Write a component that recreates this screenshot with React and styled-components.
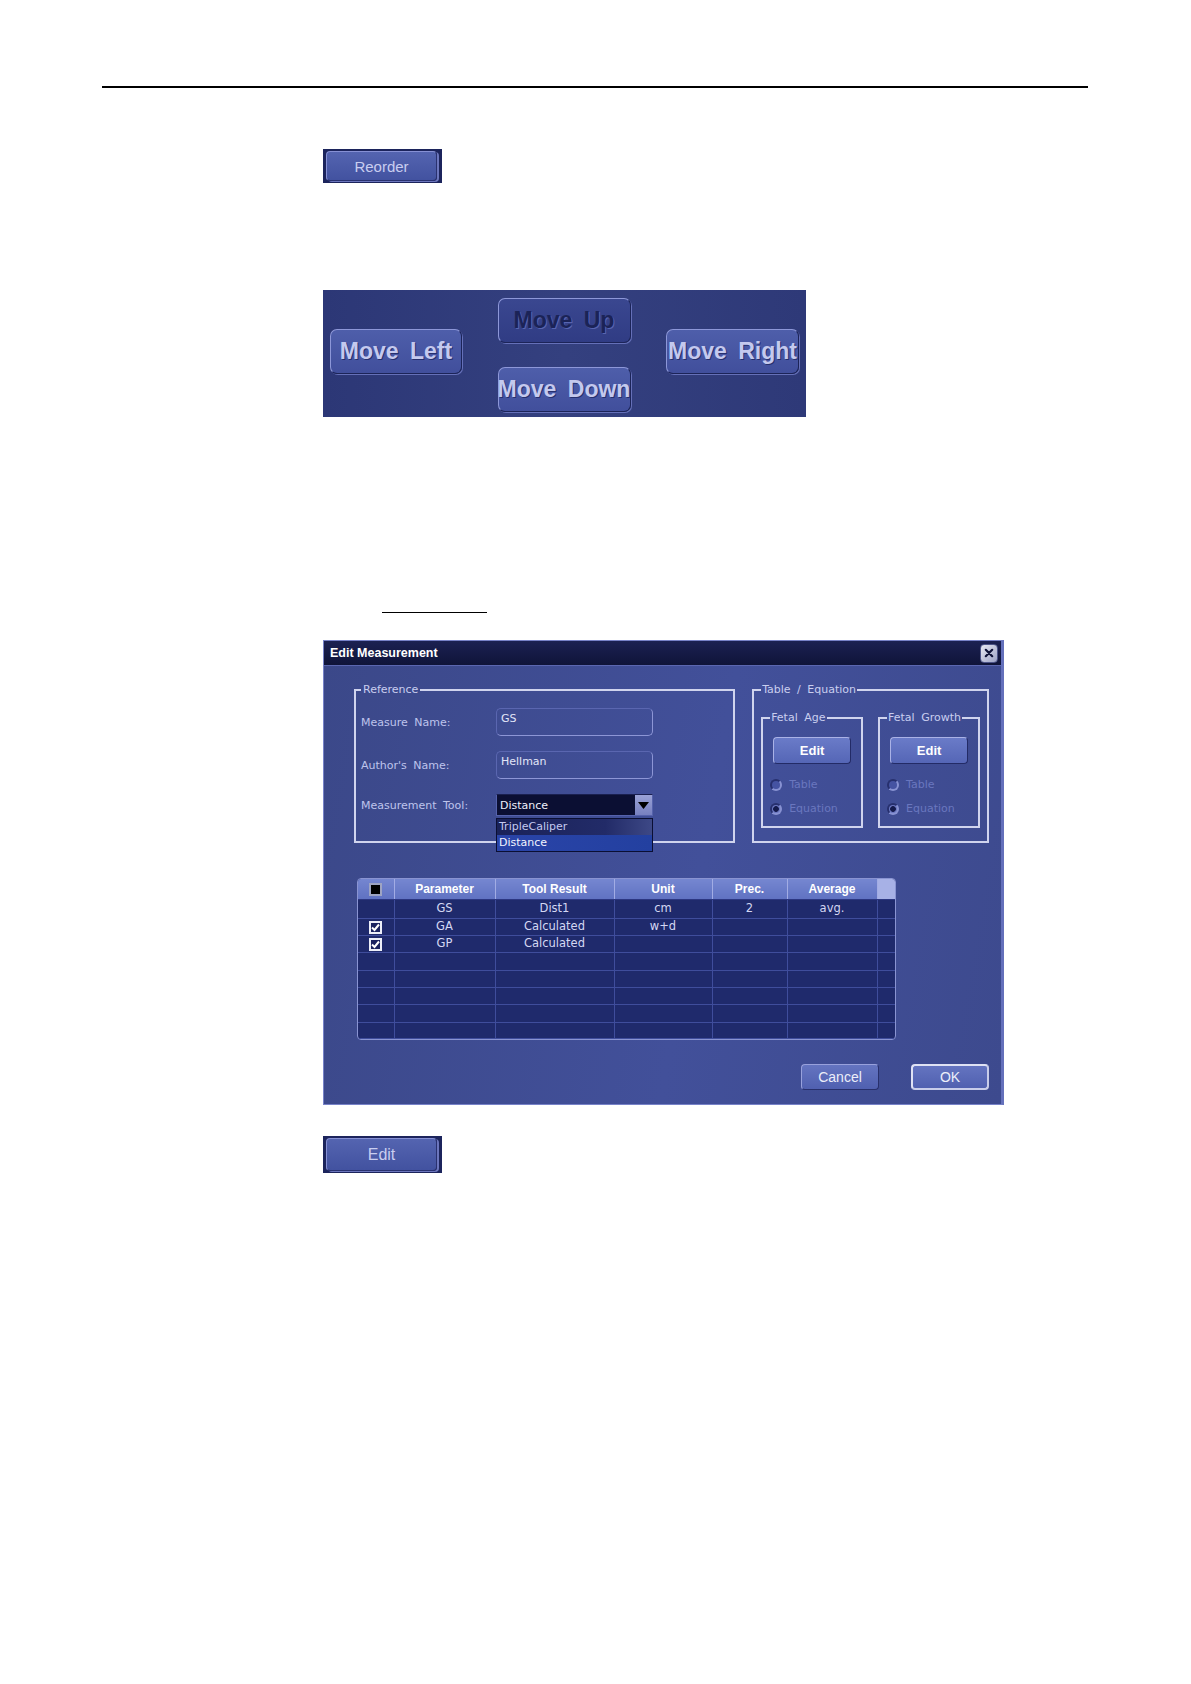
import React from "react";
import styled, { createGlobalStyle, css } from "styled-components";

const GlobalStyle = createGlobalStyle`
  body {
    margin: 0;
    background: #fff;
    font-family: "Liberation Sans", Arial, sans-serif;
  }
`;

const uiFont = `"DejaVu Sans", Verdana, sans-serif`;

const Page = styled.div`
  width: 1191px;
  height: 1684px;
  padding-top: 86px;
  box-sizing: border-box;
`;

const Rule = styled.div`
  margin-left: 102px;
  width: 986px;
  height: 2px;
  background: #000;
`;

const Content = styled.div`
  margin-left: 323px;
  display: flex;
  flex-direction: column;
  align-items: flex-start;
`;

// small dark frame holding a single key (Reorder / Edit)
const KeyFrame = styled.div`
  margin-top: ${(p) => p.$top}px;
  width: 119px;
  height: ${(p) => p.$h}px;
  box-sizing: border-box;
  background: #1c245c;
  padding: 2px 5px 2px 3px;
  display: flex;
`;

const KeyButton = styled.div`
  flex: 1;
  border-radius: 4px;
  border: 1px solid #8690d4;
  border-right-color: #2a3270;
  border-bottom-color: #2a3270;
  box-shadow: 2px 1px 0 #6c76bd;
  background: linear-gradient(#5464b0, #4252a0);
  color: #c9cef0;
  font-size: ${(p) => p.$size}px;
  display: flex;
  align-items: center;
  justify-content: center;
`;

const MovePanel = styled.div`
  margin-top: 107px;
  width: 483px;
  height: 127px;
  box-sizing: border-box;
  padding: 8px 7px 5px;
  background: linear-gradient(90deg, #2c3776, #34407f 50%, #2e3978);
  display: grid;
  grid-template-columns: 132px 133px 133px;
  justify-content: space-between;
  align-items: start;
`;

const MoveColumn = styled.div`
  display: flex;
  flex-direction: column;
  gap: 24px;
`;

const MoveButton = styled.div`
  height: 45px;
  box-sizing: border-box;
  margin-top: ${(p) => p.$top || 0}px;
  border-radius: 7px;
  border: 1px solid #8d97d8;
  border-right-color: #1c2458;
  border-bottom-color: #1c2458;
  box-shadow: 1px 1px 0 #6570b8;
  background: ${(p) =>
    p.$dim
      ? "linear-gradient(#3a4790, #303c84)"
      : "linear-gradient(#4e5eaa, #414f9c)"};
  color: ${(p) => (p.$dim ? "#1b2357" : "#c4c9ee")};
  text-shadow: ${(p) =>
    p.$dim ? "1px 1px 0 #5865b0" : "1px 1px 0 #26306e"};
  font-weight: bold;
  font-size: 23px;
  word-spacing: 5px;
  display: flex;
  align-items: center;
  justify-content: center;
  white-space: nowrap;
`;

const Underline = styled.div`
  margin: 195px 0 0 59px;
  width: 105px;
  height: 1px;
  background: #000;
`;

const Dialog = styled.div`
  margin-top: 27px;
  width: 681px;
  height: 465px;
  box-sizing: border-box;
  border: 1px solid #7782c8;
  border-right: 3px solid #6470bb;
  background: linear-gradient(100deg, #3b4889, #42509a 55%, #3d4a8e);
  display: flex;
  flex-direction: column;
`;

const TitleBar = styled.div`
  height: 25px;
  box-sizing: border-box;
  border-bottom: 1px solid #5b67b0;
  background: linear-gradient(#1b2152, #0f1439);
  display: flex;
  align-items: center;
  justify-content: space-between;
  padding: 0 3px 0 6px;
  color: #fff;
  font-weight: bold;
  font-size: 12.5px;
`;

const CloseBox = styled.div`
  width: 16px;
  height: 17px;
  border-radius: 4px;
  border: 1px solid #4c5488;
  background: linear-gradient(135deg, #e6e8f2, #9ca2c6);
  display: flex;
  align-items: center;
  justify-content: center;
`;

const Body = styled.div`
  flex: 1;
  display: flex;
  flex-direction: column;
  padding: 17px 12px 14px 30px;
  font-family: ${uiFont};
`;

const TopRow = styled.div`
  display: flex;
  gap: 17px;
  align-items: flex-start;
`;

const GroupBox = styled.fieldset`
  margin: 0;
  box-sizing: border-box;
  width: ${(p) => p.$w}px;
  height: ${(p) => p.$h}px;
  min-width: 0;
  border: 2px solid #d0d4ee;
  padding: ${(p) => p.$pad};
  position: relative;
`;

const Legend = styled.legend`
  padding: 0 ${(p) => p.$px ?? 2}px;
  font-size: 11px;
  line-height: 14px;
  color: #c9ceef;
  word-spacing: 3px;
`;

const FormGrid = styled.div`
  display: grid;
  grid-template-columns: 135px 157px;
  grid-template-rows: 28px 28px 22px;
  row-gap: 15px;
  align-items: center;
`;

const Label = styled.div`
  font-size: 11px;
  color: #bec4ec;
  word-spacing: 3px;
`;

const TextField = styled.div`
  height: 28px;
  box-sizing: border-box;
  border: 1px solid #8d96d6;
  border-top-color: #5a66b0;
  border-left-color: #5a66b0;
  border-radius: 5px;
  padding: 3px 4px;
  font-size: 11px;
  color: #e2e5f8;
`;

const SelectWrap = styled.div`
  position: relative;
  height: 22px;
`;

const SelectBox = styled.div`
  height: 22px;
  box-sizing: border-box;
  border: 1px solid #5562ac;
  border-top-color: #1a2050;
  background: #0b0f33;
  display: flex;
  align-items: center;
  justify-content: space-between;
  padding-left: 3px;
  font-size: 11px;
  color: #eef0fb;
`;

const ArrowButton = styled.div`
  width: 17px;
  height: 20px;
  background: linear-gradient(#9aa2d6, #7780c0);
  display: flex;
  align-items: center;
  justify-content: center;
`;

const DropList = styled.div`
  position: absolute;
  top: 24px;
  left: 0;
  width: 157px;
  box-sizing: border-box;
  border: 1px solid #0b0f33;
  z-index: 2;
`;

const DropItem = styled.div`
  height: 16px;
  line-height: 16px;
  padding-left: 2px;
  font-size: 11px;
  color: ${(p) => (p.$active ? "#f2f4ff" : "#c4caf0")};
  background: ${(p) =>
    p.$active
      ? "linear-gradient(90deg, #2a44a8, #2340a0)"
      : "linear-gradient(90deg, #1a2258, #222b68 70%, #3d4886)"};
`;

const EquationRow = styled.div`
  display: flex;
  gap: 15px;
`;

const FetalBox = styled.div`
  display: flex;
  flex-direction: column;
  align-items: flex-start;
  padding-top: 12px;
`;

const SmallEdit = styled.div`
  margin-left: 3px;
  width: 78px;
  height: 27px;
  box-sizing: border-box;
  border-radius: 4px;
  border: 1px solid #aab2e6;
  border-right-color: #232b66;
  border-bottom-color: #232b66;
  background: linear-gradient(#6a7bc8, #5566b6);
  color: #fff;
  font-family: "Liberation Sans", Arial, sans-serif;
  font-weight: bold;
  font-size: 13px;
  display: flex;
  align-items: center;
  justify-content: center;
`;

const RadioRow = styled.div`
  margin-top: ${(p) => p.$top}px;
  display: flex;
  align-items: center;
  gap: 7px;
  font-size: 11px;
  color: #6a77bf;
`;

const Radio = styled.span`
  width: 12px;
  height: 12px;
  border-radius: 50%;
  box-sizing: border-box;
  border: 2px solid #27306e;
  border-right-color: #8892d2;
  border-bottom-color: #8892d2;
  background: #4553a2;
  ${(p) =>
    p.$checked &&
    css`
      background: radial-gradient(circle, #141a4c 0 2.5px, #6a76c0 3.2px);
    `}
`;

const TableFrame = styled.div`
  margin: 35px 0 0 3px;
  width: 537px;
  border: 1px solid #8a94d2;
  border-radius: 4px;
  overflow: hidden;
  background: #1f2a6c;
`;

const Grid = styled.table`
  width: 100%;
  border-collapse: collapse;
  table-layout: fixed;
`;

const HeadCell = styled.th`
  height: 20px;
  padding: 0;
  background: ${(p) =>
    p.$scroll ? "#a7b1e6" : "linear-gradient(#7586d0, #6072c2)"};
  border-right: 1px solid #a2ace4;
  border-bottom: 1px solid #2c3782;
  color: #fff;
  font-family: "Liberation Sans", Arial, sans-serif;
  font-weight: bold;
  font-size: 12px;
  text-align: center;
  &:last-child {
    border-right: none;
  }
`;

const Cell = styled.td`
  height: ${(p) => p.$h}px;
  padding: 0;
  border-right: 1px solid #3f4d9c;
  border-bottom: 1px solid #3f4d9c;
  color: #d4d8f3;
  font-family: ${uiFont};
  font-size: 11.5px;
  text-align: center;
  line-height: 1;
  &:last-child {
    border-right: none;
  }
`;

const HeadBox = styled.span`
  display: inline-block;
  width: 13px;
  height: 13px;
  box-sizing: border-box;
  border: 2px solid #9ea4c2;
  background: #000;
  vertical-align: middle;
`;

const CheckBox = styled.span`
  display: inline-flex;
  align-items: center;
  justify-content: center;
  width: 13px;
  height: 13px;
  box-sizing: border-box;
  border: 2px solid #eceef8;
  background: #1a2260;
  vertical-align: middle;
`;

const ButtonRow = styled.div`
  margin-top: auto;
  display: flex;
  justify-content: flex-end;
  gap: 32px;
`;

const DialogButton = styled.div`
  width: 78px;
  height: 26px;
  box-sizing: border-box;
  border-radius: 4px;
  border: ${(p) => (p.$focus ? "2px solid #dfe2f4" : "1px solid #98a1dc")};
  border-right-color: ${(p) => (p.$focus ? "#c8cdea" : "#28306c")};
  border-bottom-color: ${(p) => (p.$focus ? "#c8cdea" : "#28306c")};
  background: linear-gradient(#6474c0, #5060b0);
  color: #eceef9;
  font-family: "Liberation Sans", Arial, sans-serif;
  font-size: 14px;
  display: flex;
  align-items: center;
  justify-content: center;
`;

const widths = [36, 101, 119, 98, 75, 90, 18];
const headers = ["", "Parameter", "Tool Result", "Unit", "Prec.", "Average", ""];
const rows = [
  { check: false, cells: ["GS", "Dist1", "cm", "2", "avg."], h: 18 },
  { check: true, cells: ["GA", "Calculated", "w+d", "", ""], h: 16 },
  { check: true, cells: ["GP", "Calculated", "", "", ""], h: 16 },
  { cells: [], h: 17 },
  { cells: [], h: 16 },
  { cells: [], h: 16 },
  { cells: [], h: 17 },
  { cells: [], h: 15 },
];

const Check = () => (
  <svg width="9" height="9" viewBox="0 0 9 9">
    <path d="M1 4.5 L3.5 7 L8 1.5" stroke="#fff" strokeWidth="2" fill="none" />
  </svg>
);

const FetalGroup = ({ title }) => (
  <GroupBox $w={103} $h={117} $pad="0 7px">
    <Legend $px={1}>{title}</Legend>
    <FetalBox>
      <SmallEdit>Edit</SmallEdit>
      <RadioRow $top={14}>
        <Radio />
        Table
      </RadioRow>
      <RadioRow $top={11}>
        <Radio $checked />
        Equation
      </RadioRow>
    </FetalBox>
  </GroupBox>
);

const MeasurementTable = () => (
  <TableFrame>
    <Grid>
      <colgroup>
        {widths.map((w, i) => (
          <col key={i} style={{ width: w }} />
        ))}
      </colgroup>
      <thead>
        <tr>
          {headers.map((h, i) => (
            <HeadCell key={i} $scroll={i === headers.length - 1}>
              {i === 0 ? <HeadBox /> : h}
            </HeadCell>
          ))}
        </tr>
      </thead>
      <tbody>
        {rows.map((r, ri) => (
          <tr key={ri}>
            <Cell $h={r.h}>
              {r.check && (
                <CheckBox>
                  <Check />
                </CheckBox>
              )}
            </Cell>
            {[0, 1, 2, 3, 4].map((ci) => (
              <Cell key={ci} $h={r.h}>
                {r.cells[ci] || ""}
              </Cell>
            ))}
            <Cell $h={r.h} />
          </tr>
        ))}
      </tbody>
    </Grid>
  </TableFrame>
);

const EditMeasurement = () => (
  <Dialog>
    <TitleBar>
      Edit Measurement
      <CloseBox>
        <svg width="10" height="10" viewBox="0 0 10 10">
          <path
            d="M1.8 1.8 L8.2 8.2 M8.2 1.8 L1.8 8.2"
            stroke="#0e1238"
            strokeWidth="2.2"
            strokeLinecap="round"
          />
        </svg>
      </CloseBox>
    </TitleBar>
    <Body>
      <TopRow>
        <GroupBox $w={383} $h={160} $pad="11px 5px 0">
          <Legend>Reference</Legend>
          <FormGrid>
            <Label>Measure Name:</Label>
            <TextField>GS</TextField>
            <Label>Author's Name:</Label>
            <TextField>Hellman</TextField>
            <Label>Measurement Tool:</Label>
            <SelectWrap>
              <SelectBox>
                Distance
                <ArrowButton>
                  <svg width="11" height="7" viewBox="0 0 11 7">
                    <path d="M0 0 H11 L5.5 7 Z" fill="#000" />
                  </svg>
                </ArrowButton>
              </SelectBox>
              <DropList>
                <DropItem>TripleCaliper</DropItem>
                <DropItem $active>Distance</DropItem>
              </DropList>
            </SelectWrap>
          </FormGrid>
        </GroupBox>
        <GroupBox $w={238} $h={160} $pad="14px 7px 0">
          <Legend $px={1}>Table / Equation</Legend>
          <EquationRow>
            <FetalGroup title="Fetal Age" />
            <FetalGroup title="Fetal Growth" />
          </EquationRow>
        </GroupBox>
      </TopRow>
      <MeasurementTable />
      <ButtonRow>
        <DialogButton>Cancel</DialogButton>
        <DialogButton $focus>OK</DialogButton>
      </ButtonRow>
    </Body>
  </Dialog>
);

export default function App() {
  return (
    <Page>
      <GlobalStyle />
      <Rule />
      <Content>
        <KeyFrame $top={61} $h={34}>
          <KeyButton $size={15}>Reorder</KeyButton>
        </KeyFrame>
        <MovePanel>
          <MoveButton $top={31}>Move Left</MoveButton>
          <MoveColumn>
            <MoveButton $dim>Move Up</MoveButton>
            <MoveButton>Move Down</MoveButton>
          </MoveColumn>
          <MoveButton $top={31}>Move Right</MoveButton>
        </MovePanel>
        <Underline />
        <EditMeasurement />
        <KeyFrame $top={31} $h={37}>
          <KeyButton $size={16}>Edit</KeyButton>
        </KeyFrame>
      </Content>
    </Page>
  );
}
